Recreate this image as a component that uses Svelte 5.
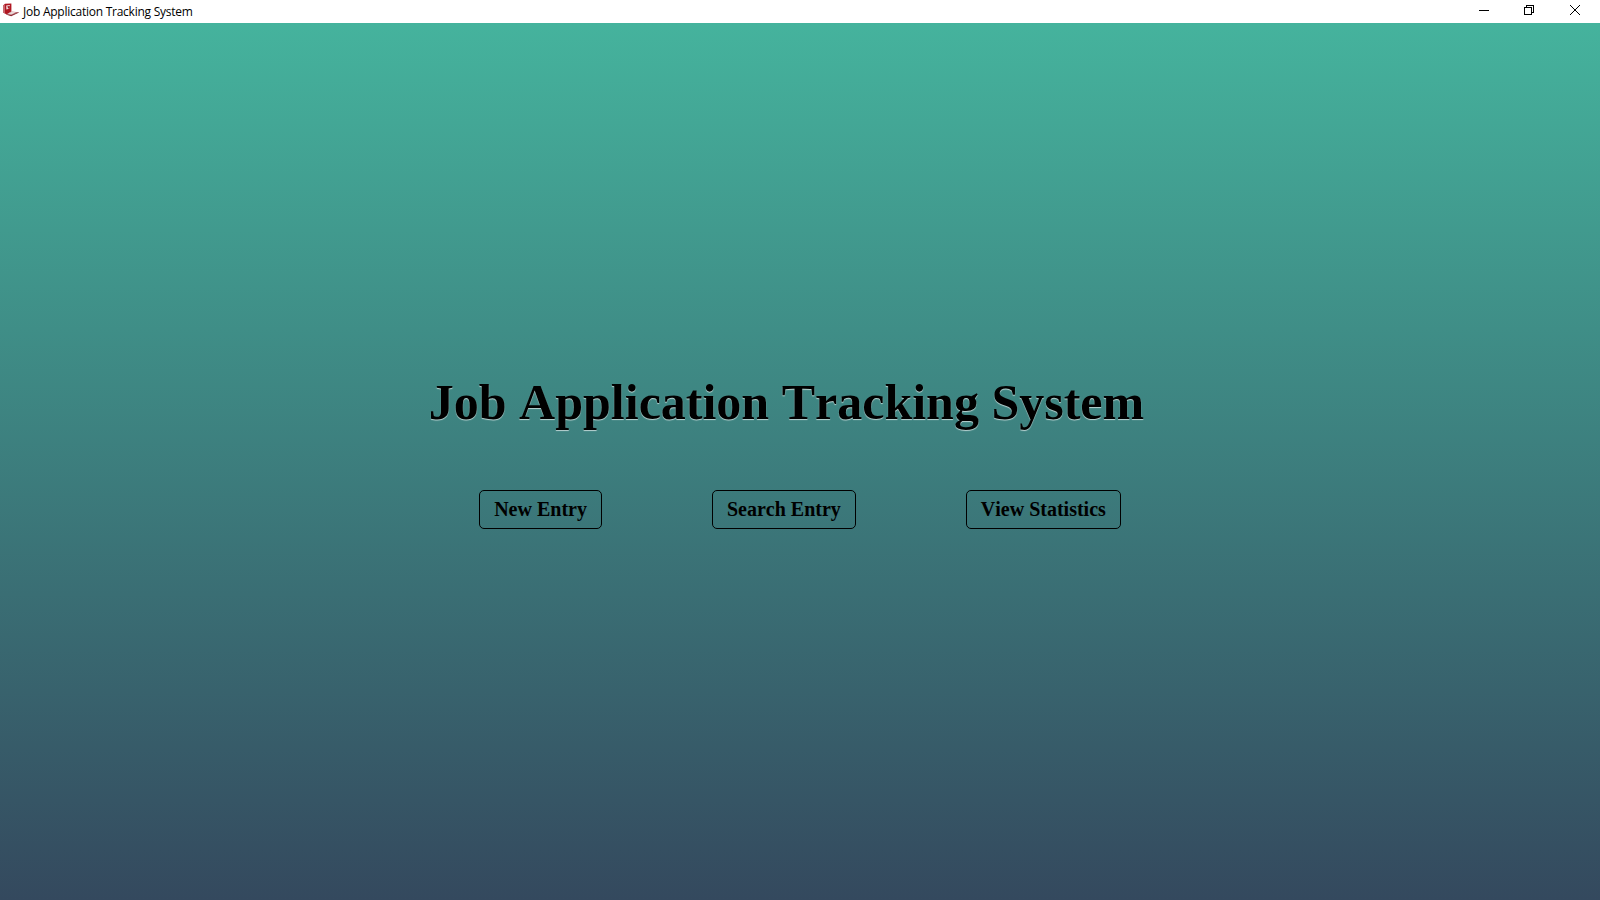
<script>
  const title = 'Job Application Tracking System';
  const actions = ['New Entry', 'Search Entry', 'View Statistics'];
</script>

<div class="window">
  <header class="titlebar">
    <svg class="logo" width="16" height="14" viewBox="0 0 16 14" aria-hidden="true">
      <path d="M.2 2.4 2 .8 8.4.4v8.2L3.6 11.4.2 9.6Z" fill="#b01722" />
      <path d="M0 2.6 1.4 1.4 2 2.4V10.4L0 9.4Z" fill="#c9676e" />
      <path d="M3.2 2.4 6.8 2v3.6L3.4 6.4Z" fill="#f3dcdd" />
      <path d="M4.4 3.2 6.8 2.9v3L5 5.2Z" fill="#a81c26" />
      <path d="m3.4 11.4 4.8-3 7.4.8-7.4 3.4Z" fill="#b8747a" />
      <path d="m4.8 11 3.8-2.2 4.4.5-4.6 2.2Z" fill="#ecd9da" />
      <path d="m3.4 11.2 4.8.9 7.4-3.1v.8L8.2 13.2l-4.6-1.4Z" fill="#8e2b35" />
    </svg>
    <span class="caption">{title}</span>
    <div class="controls">
      <svg width="46" height="22" viewBox="0 0 46 22" shape-rendering="crispEdges">
        <path d="M19 10.5h10" stroke="#000" />
      </svg>
      <svg width="46" height="22" viewBox="0 0 46 22" fill="none" stroke="#000" shape-rendering="crispEdges">
        <path d="M18.5 7.5h7v7h-7zM20.5 7V5.5h7v7H26" />
      </svg>
      <svg width="46" height="22" viewBox="0 0 46 22" fill="none" stroke="#000">
        <path d="m18 5 10 10M28 5 18 15" />
      </svg>
    </div>
  </header>

  <main>
    <h1>{title}</h1>
    <nav>
      {#each actions as action}
        <button type="button">{action}</button>
      {/each}
    </nav>
  </main>
</div>

<style>
  :global(body) {
    margin: 0;
    overflow: hidden;
  }
  .window {
    display: flex;
    flex-direction: column;
    width: 100vw;
    height: 100vh;
  }
  .titlebar {
    display: flex;
    flex: none;
    height: 23px;
    box-sizing: border-box;
    padding-left: 3px;
    background: #fff;
  }
  .logo {
    margin-top: 3px;
  }
  .caption {
    margin-left: 4px;
    font: 12px/23px 'Open Sans', 'Noto Sans', sans-serif;
    letter-spacing: -0.25px;
    color: #000;
    white-space: nowrap;
  }
  .controls {
    display: flex;
    margin-left: auto;
    margin-right: 2px;
  }
  main {
    flex: 1;
    background: linear-gradient(#45b39d, #34495e);
    font-family: 'Liberation Serif', 'Times New Roman', serif;
    font-kerning: none;
    color: #000;
  }
  h1 {
    margin: 351px 27px 60px 0;
    font-size: 50px;
    line-height: 56px;
    text-align: center;
    text-shadow: 0 1px 1px rgba(255, 255, 255, 0.65);
  }
  nav {
    display: flex;
    justify-content: center;
    gap: 110px;
  }
  button {
    height: 39px;
    padding: 0 14px;
    border: 1px solid #000;
    border-radius: 5px;
    background: transparent;
    font: bold 20px/37px 'Liberation Serif', 'Times New Roman', serif;
    font-kerning: none;
    color: #000;
  }
</style>
